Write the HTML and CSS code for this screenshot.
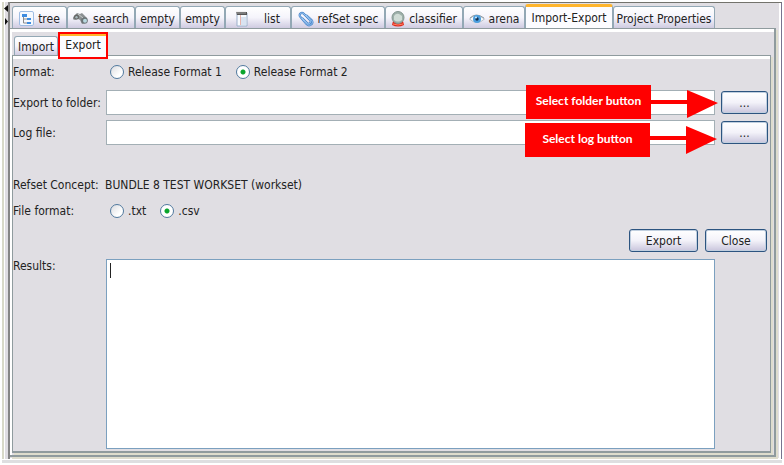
FILE: index.html
```
<!DOCTYPE html>
<html lang="en">
<head>
<meta charset="utf-8">
<title>Import-Export</title>
<link rel="stylesheet" href="styles.css">
</head>
<body>
<div class="window">
  <div class="splitter">
    <svg width="4" height="22" viewBox="0 0 4 22" aria-hidden="true"><path d="M4 1v7L0 4.500zM1 14v7l3-3.500z" fill="#111"/></svg>
  </div>
  <main class="workspace">
    <div class="tabs" role="tablist" aria-label="Views">
      <button class="tab tree" role="tab"><svg width="15" height="15" viewBox="0 0 15 15"><rect x=".5" y=".5" width="14" height="14" rx="1.500" fill="#f5f9ff" stroke="#9fbde3"/><path d="M4.500 5v7H9M4.500 8H9" fill="none" stroke="#8a8a8a"/><path d="M3 3h5v3H3zM8 7h4v2H8zM8 11h4v2H8z" fill="#3c8be0"/></svg>tree</button>
      <button class="tab search" role="tab"><svg width="16" height="13" viewBox="0 0 16 13"><path d="M1 4l3-3 3 1 2-1 2 2 3 3-2 5-3 1-2-4-2-1-3 1-3-1z" fill="#8b9092"/><circle cx="3.500" cy="5" r="2.500" fill="#666"/><circle cx="11.500" cy="8.500" r="3.300" fill="#6b7376"/><circle cx="12" cy="8.800" r="2" fill="#b8d8df"/><circle cx="3.500" cy="5.300" r="1.200" fill="#a6b8bc"/><path d="M5 2l5 4" stroke="#c9cccc"/></svg>search</button>
      <button class="tab empty" role="tab">empty</button>
      <button class="tab empty" role="tab">empty</button>
      <button class="tab list" role="tab"><svg width="12" height="16" viewBox="0 0 12 16"><path d="M1 2h10v13H1z" fill="#f8fbff" stroke="#9bb0cb"/><path d="M0 1h11v3H1z" fill="#555"/><path d="M1 0v3M3 0v3M5 0v3M7 0v3M9 0v3" stroke="#ddd" stroke-width=".6"/><path d="M5 7h5M5 9h5M5 11h5M5 13h5" stroke="#b9cbe3"/><path d="M4.500 4v10" stroke="#e7b3ab"/></svg><span class="list-name">list</span></button>
      <button class="tab refset" role="tab"><svg width="16" height="16" viewBox="0 0 16 16" fill="none"><path d="M4 7l5 5c2 2 5-.5 3-3L6 3C3.500 .5 0 3.500 2.500 6l6 7c3 3 8-.5 5-4L8 4" stroke="#4d87cb" stroke-width="2.200"/><path d="M4 7l5 5c2 2 5-.5 3-3L6 3C3.500 .5 0 3.500 2.500 6l6 7c3 3 8-.5 5-4L8 4" stroke="#9cc8f3" stroke-width=".9"/></svg>refSet spec</button>
      <button class="tab classifier" role="tab"><svg width="14" height="16" viewBox="0 0 14 16"><path d="M2 10h10l1 4q-6 3-12 0z" fill="#e02a1c"/><circle cx="7" cy="6.500" r="6" fill="#9eb0aa" stroke="#849690"/><path d="M3 5q2-3 5-2l3 2v4q-4 3-8 0z" fill="#d0dcd6"/><path d="M2 13q5 2 10 0" fill="none" stroke="#ff8065"/></svg>classifier</button>
      <button class="tab arena" role="tab"><svg width="16" height="12" viewBox="0 0 16 12"><path d="M.5 6Q7-1 15.500 6 8 13 .5 6z" fill="#f8fbfd" stroke="#b5bec5"/><path d="M1 5Q7-1 15 5" fill="none" stroke="#929ca3"/><circle cx="8" cy="6" r="4" fill="#4c9fdf"/><circle cx="8" cy="6" r="1.700" fill="#122f50"/><circle cx="7" cy="4.500" r="1" fill="#d3edff"/></svg>arena</button>
      <button class="tab export-view selected" role="tab" aria-selected="true">Import-Export</button>
      <button class="tab properties" role="tab">Project Properties</button>
    </div>
    <section class="outer-panel">
      <div class="tabs inner-tabs" role="tablist" aria-label="Direction">
        <button class="tab import" role="tab">Import</button>
        <button class="tab export selected" role="tab" aria-selected="true">Export</button>
      </div>
      <form class="form">
        <div class="row format-row" role="radiogroup" aria-labelledby="format">
          <span id="format">Format:</span>
          <div class="choices">
            <label><input type="radio" name="release">Release Format 1</label>
            <label><input type="radio" name="release" checked>Release Format 2</label>
          </div>
        </div>
        <div class="row file-row">
          <label for="folder">Export to folder:</label>
          <div class="field">
            <input type="text" id="folder">
            <div class="callout folder-callout"><span>Select folder button</span><svg width="67" height="28" viewBox="0 0 67 28"><path d="M0 10h36V0l31 13-31 15V14H0z" fill="red"/></svg></div>
          </div>
          <button type="button" class="button" aria-label="Select folder">...</button>
        </div>
        <div class="row file-row">
          <label for="log">Log file:</label>
          <div class="field">
            <input type="text" id="log">
            <div class="callout log-callout"><span>Select log button</span><svg width="67" height="28" viewBox="0 0 67 28"><path d="M0 10h36V0l31 13-31 15V14H0z" fill="red"/></svg></div>
          </div>
          <button type="button" class="button" aria-label="Select log">...</button>
        </div>
        <div class="row concept-row"><span>Refset Concept:</span><span>BUNDLE 8 TEST WORKSET (workset)</span></div>
        <div class="row type-row" role="radiogroup" aria-labelledby="type">
          <span id="type">File format:</span>
          <div class="choices">
            <label><input type="radio" name="type">.txt</label>
            <label><input type="radio" name="type" checked>.csv</label>
          </div>
        </div>
        <div class="actions">
          <button type="button" class="button export-button">Export</button>
          <button type="button" class="button close-button">Close</button>
        </div>
        <div class="row results-row">
          <label for="results">Results:</label>
          <div class="results"><textarea id="results"></textarea><i class="caret"></i></div>
        </div>
      </form>
    </section>
  </main>
</div>
</body>
</html>
```
FILE: styles.css
```
* { box-sizing: border-box; }
body {
  margin: 0;
  background: #fff;
  color: #222;
  font: 12px/14px "DejaVu Sans Condensed", "DejaVu Sans", sans-serif;
}
button, input, textarea { font: inherit; color: inherit; }
.window {
  display: flex;
  min-height: 100vh;
  padding: 2px 2px 6px;
  background: linear-gradient(#dedee0, #dedee0) 2px calc(100% - 2px) / calc(100% - 4px) 3px no-repeat;
}
.splitter {
  width: 8px;
  padding-top: 2px;
  border-left: 2px solid #d8d9c8;
  border-right: 2px solid #858585;
  background: linear-gradient(90deg, #fff 1px, #dfdde2 1px);
}
.splitter svg { display: block; }
.workspace {
  flex: 1;
  min-width: 0;
  display: flex;
  flex-direction: column;
  border-top: 1px solid #73736c;
  border-right: 1px solid #77738f;
  padding-right: 2px;
  background: linear-gradient(#e0dee3, #e0dee3) 0 0 / calc(100% - 2px) calc(100% - 1px) no-repeat;
}
.tabs { display: flex; align-items: flex-end; }
.workspace > .tabs { height: 25px; padding-left: 2px; }
.tab {
  flex: none;
  display: flex;
  align-items: center;
  justify-content: center;
  gap: 4px;
  height: 22px;
  margin: 0;
  padding: 2px 0 0;
  border: 1px solid #93a8b5;
  border-bottom: 0;
  border-radius: 3px 3px 0 0;
  background: linear-gradient(#fff, #f5f4fb 50%, #cfcbe1);
  white-space: nowrap;
}
.tree { width: 55px; }
.search { width: 68px; }
.empty { width: 45px; }
.list { width: 66px; }
.list-name { padding-left: 12px; }
.refset { width: 94px; }
.classifier { width: 78px; }
.arena { width: 62px; }
.export-view { width: 88px; }
.properties { width: 102px; }
.workspace .selected {
  height: 24px;
  padding-bottom: 2px;
  border-top: 3px solid #ffb52c;
  background: #fcfcff;
}
.outer-panel {
  flex: 1;
  display: flex;
  flex-direction: column;
  border: solid #8f9b9e;
  border-width: 1px 2px 2px 0;
  margin: 0 3px 2px 0;
  padding: 4px 3px 2px 2px;
  background: linear-gradient(#fff, #fff) 0 0 / 100% 3px no-repeat, linear-gradient(90deg, #fff 2px, #e0dee3 2px);
  box-shadow: 2px 2px #deddcd;
}
.inner-tabs { height: 22px; padding-left: 2px; }
.inner-tabs .tab { height: 19px; }
.import { width: 44px; }
.workspace .export {
  position: relative;
  width: 50px;
  height: 27px;
  margin-bottom: -4px;
  padding-bottom: 4px;
  border: 2px solid #f00;
  border-radius: 0;
  background: linear-gradient(#ffb52c 2px, #fcfcff 2px);
}
.form {
  flex: 1;
  display: flex;
  flex-direction: column;
  border: solid #8f9b9e;
  border-width: 1px 1px 2px;
  padding: 4px 2px 2px 0;
  background: linear-gradient(#fff, #fff) 0 0 / 100% 3px no-repeat, #e0dee3;
  box-shadow: 2px 2px #deddcd;
}
.row {
  display: grid;
  grid-template-columns: 93px minmax(0, 1fr) 47px;
  column-gap: 6px;
  align-items: center;
}
.row > :first-child { margin-right: -6px; white-space: nowrap; }
.row > :nth-child(2) { margin-left: -6px; }
.format-row { height: 24px; }
.choices { display: flex; gap: 14px; padding-left: 4px; }
.choices label { display: flex; align-items: center; gap: 4px; }
input[type="radio"] {
  appearance: none;
  width: 14px;
  height: 14px;
  margin: 0;
  border: 1px solid #517a9f;
  border-radius: 50%;
  background: linear-gradient(135deg, #dcdce0, #fff 70%);
}
input[type="radio"]:checked { background: radial-gradient(circle, #0aa52c 2px, #fff 3px); }
.file-row { height: 24px; margin-top: 6px; }
.field { position: relative; }
.field input {
  display: block;
  width: 100%;
  height: 25px;
  border: 1px solid #a3afb5;
  padding: 3px;
  background: #fff;
}
.button {
  height: 23px;
  padding: 0;
  border: 1px solid #2c5480;
  border-radius: 3px;
  background: linear-gradient(#fff, #f3f2f9 50%, #c9c5dc);
  box-shadow: inset 0 0 0 1px #c1cfdf;
}
.callout { position: absolute; right: -3px; z-index: 1; display: flex; align-items: center; }
.callout span {
  width: 125px;
  height: 34px;
  padding-top: 8px;
  background: #f00;
  color: #fff;
  font: bold 12px/15px Lato, sans-serif;
  text-align: center;
}
.callout svg { display: block; margin-top: 4px; }
.folder-callout { top: -5px; }
.log-callout { top: 3px; right: -2px; }
.log-callout svg { margin-top: 0; }
.concept-row { height: 24px; margin-top: 29px; }
.concept-row span:nth-child(2) { margin-left: -7px; }
.type-row { height: 24px; margin-top: 2px; }
.actions { display: flex; justify-content: flex-end; gap: 7px; margin: 6px 1px 0 0; }
.export-button { width: 69px; }
.close-button { width: 62px; }
.results-row { flex: 1; align-items: stretch; margin-top: 7px; }
.results { position: relative; display: flex; }
.results textarea {
  width: 100%;
  min-height: 60px;
  border: 1px solid #7ba0bf;
  padding: 3px;
  resize: none;
  background: #fff;
}
.caret { position: absolute; left: 4px; top: 4px; width: 1px; height: 15px; background: #222; }
```
